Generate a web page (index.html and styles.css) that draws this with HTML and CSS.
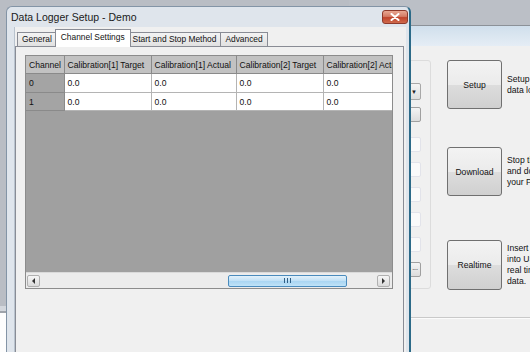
FILE: index.html
```html
<!DOCTYPE html>
<html lang="en">
<head>
  <meta charset="UTF-8" />
  <title>Data Logger Setup - Demo</title>
  <link rel="stylesheet" href="styles.css">
</head>
<body>
  <!-- main application window behind the dialog -->
  <div class="bgwin">
    <div class="bgwin-top"></div>
    <div class="bgwin-head"></div>
    <div class="bgwin-body">
      <div class="group">
        <div class="ctl combo"><span class="arrow">&#9660;</span></div>
        <div class="ctl btn-small"></div>
        <div class="ctl tb first"></div>
        <div class="ctl tb"></div>
        <div class="ctl tb"></div>
        <div class="ctl tb"></div>
        <div class="ctl tb"></div>
        <div class="ctl btn-small dots">...</div>
      </div>
      <div class="actions">
        <div class="action">
          <button class="big-btn">Setup</button>
          <p>Setup the<br>data logger</p>
        </div>
        <div class="action second">
          <button class="big-btn">Download</button>
          <p>Stop the logger<br>and download to<br>your PC.</p>
        </div>
        <div class="action third">
          <button class="big-btn">Realtime</button>
          <p>Insert logger<br>into USB for<br>real time<br>data.</p>
        </div>
      </div>
    </div>
    <div class="bgwin-foot"></div>
  </div>

  <!-- setup dialog -->
  <div class="dialog">
    <div class="titlebar">
      <span class="title">Data Logger Setup - Demo</span>
      <div class="close">
        <svg width="10" height="8" viewBox="0 0 10 8">
          <path d="M1.5 1 L8.5 7 M8.5 1 L1.5 7" stroke="#fff" stroke-width="2" stroke-linecap="round"/>
        </svg>
      </div>
    </div>
    <div class="client">
      <div class="tabs">
        <div class="tab">General</div>
        <div class="tab active">Channel Settings</div>
        <div class="tab">Start and Stop Method</div>
        <div class="tab">Advanced</div>
      </div>
      <div class="panel">
        <div class="grid">
          <table>
            <colgroup>
              <col class="c-channel">
              <col class="c-87">
              <col class="c-85">
              <col class="c-87">
              <col class="c-86">
            </colgroup>
            <tr class="head">
              <th class="rowhead">Channel</th>
              <th>Calibration[1] Target</th>
              <th>Calibration[1] Actual</th>
              <th>Calibration[2] Target</th>
              <th>Calibration[2] Actual</th>
            </tr>
            <tr class="r0">
              <td class="rowhead">0</td>
              <td>0.0</td><td>0.0</td><td>0.0</td><td>0.0</td>
            </tr>
            <tr class="r1">
              <td class="rowhead">1</td>
              <td>0.0</td><td>0.0</td><td>0.0</td><td>0.0</td>
            </tr>
          </table>
          <div class="empty"></div>
          <div class="hscroll">
            <div class="sbtn"><span class="tri left"></span></div>
            <div class="track"><div class="thumb"><span class="grip"></span></div></div>
            <div class="sbtn"><span class="tri right"></span></div>
          </div>
        </div>
      </div>
    </div>
  </div>
</body>
</html>
```

FILE: styles.css
```css
html, body {
  margin: 0;
  width: 530px;
  height: 352px;
  overflow: hidden;
}

body {
  position: relative;
  font-family: "Liberation Sans", Arial, sans-serif;
  font-size: 8.6px;
  color: #111;
  background: linear-gradient(to bottom, #b9bdc4 0, #b9bdc4 306px, #d3d7dd 306px, #d3d7dd 311px, #9ea3aa 311px, #9ea3aa 313px, #fdfdfd 313px);
}

/* ---------- background window ---------- */
.bgwin {
  position: absolute;
  left: 349px;
  top: 0;
  right: 0;
  bottom: 0;
  display: flex;
  flex-direction: column;
  background: #f0f0f0;
  overflow: hidden;
}

.bgwin-top {
  height: 25px;
  background: #bbbfc6;
  border-bottom: 1px solid #8c9198;
}

.bgwin-head {
  height: 20px;
  background: linear-gradient(to bottom, #d0dfec, #e5edf5);
}

.bgwin-body {
  height: 257px;
  padding: 14px 0 0 10px;
  display: flex;
  border-bottom: 1px solid #c9c9c9;
  background: #f0f0f0;
}

.bgwin-foot {
  flex: 1;
  border-top: 1px solid #fbfbfb;
  background: #f0f0f0;
}

.group {
  flex: none;
  width: 72px;
  height: 229px;
  border: 1px solid #dcdcdc;
  border-radius: 3px;
  display: flex;
  flex-direction: column;
  align-items: flex-end;
  padding-right: 9px;
  box-sizing: border-box;
}

.ctl {
  width: 50px;
  height: 15px;
  box-sizing: border-box;
  margin-top: 10px;
  border-radius: 2px;
}

.combo {
  height: 17px;
  margin-top: 22px;
  border: 1px solid #a8a8a8;
  background: linear-gradient(to bottom, #f4f4f4, #dedede);
  display: flex;
  justify-content: flex-end;
  align-items: center;
  padding-right: 3px;
}

.arrow {
  font-size: 6px;
  color: #222;
}

.btn-small {
  margin-top: 7px;
  border: 1px solid #a0a0a0;
  background: linear-gradient(to bottom, #f4f4f4, #dcdcdc);
}

.tb {
  border: 1px solid #e2e3ea;
  background: #fafafa;
}

.tb.first {
  margin-top: 15px;
}

.dots {
  margin-top: 10px;
  font-size: 7px;
  text-align: right;
  padding-right: 2px;
  line-height: 10px;
}

.actions {
  flex: none;
  margin-left: 16px;
  display: flex;
  flex-direction: column;
}

.action {
  display: flex;
  align-items: center;
}

.action.second { margin-top: 38px; }
.action.third { margin-top: 44px; }

.big-btn {
  flex: none;
  width: 55px;
  height: 49px;
  border: 1px solid #707070;
  border-radius: 3px;
  background: linear-gradient(to bottom, #f3f3f3 0, #ebebeb 50%, #dddddd 50%, #d0d0d0 100%);
  font-family: "Liberation Sans", Arial, sans-serif;
  font-size: 8.6px;
  color: #111;
  padding: 0;
}

.action.third .big-btn {
  height: 50px;
}

.action p {
  margin: 0 0 0 5px;
  line-height: 11px;
  white-space: nowrap;
}

/* ---------- dialog ---------- */
.dialog {
  position: absolute;
  left: 6px;
  top: 6px;
  width: 405px;
  height: 360px;
  box-sizing: border-box;
  border: 1px solid #8394a6;
  border-right: 2px solid #2c6a88;
  border-radius: 6px 6px 0 0;
  background: #dfe5ec;
  display: flex;
  flex-direction: column;
}

.titlebar {
  height: 20px;
  display: flex;
  justify-content: space-between;
  align-items: flex-start;
  padding: 0 1px 0 4px;
}

.title {
  font-size: 10.5px;
  color: #1a1a1a;
  line-height: 20px;
}

.close {
  margin-top: 3px;
  width: 26px;
  height: 14px;
  box-sizing: border-box;
  border: 1px solid #8e3a2c;
  border-radius: 3px;
  background: linear-gradient(to bottom, #e9a792 0, #d47c66 45%, #c0442c 55%, #cf6a4c 100%);
  display: flex;
  align-items: center;
  justify-content: center;
}

.client {
  flex: 1;
  margin: 0 3px 0 7px;
  background: #f0f0f0;
  border-left: 1px solid #b9c3ce;
  padding: 2px 2px 0 0;
  display: flex;
  flex-direction: column;
}

.tabs {
  height: 17px;
  display: flex;
  align-items: flex-end;
  padding-left: 2px;
}

.tab {
  height: 14px;
  line-height: 13px;
  padding: 0 4px;
  box-sizing: border-box;
  border: 1px solid #898c95;
  border-bottom: none;
  background: linear-gradient(to bottom, #f3f3f3, #e1e1e1);
  margin-left: -1px;
  white-space: nowrap;
  font-size: 8.4px;
}

.tab:first-child {
  margin-left: 0;
}

.tab.active {
  position: relative;
  z-index: 1;
  height: 18px;
  margin: 0 -2px -1px -2px;
  padding: 0 5px;
  line-height: 15px;
  background: #fff;
}

.panel {
  flex: 1;
  border: 1px solid #898c95;
  background: #f0f0f0;
  padding: 8px 10px 0 9px;
}

/* ---------- data grid ---------- */
.grid {
  height: 234px;
  display: flex;
  flex-direction: column;
  border: 1px solid #8c8c8c;
  box-sizing: border-box;
  overflow: hidden;
  background: #a0a0a0;
}

table {
  border-collapse: collapse;
  table-layout: fixed;
  width: 383px;
  flex: none;
}

.c-channel { width: 38px; }
.c-87 { width: 87px; }
.c-85 { width: 85px; }
.c-86 { width: 86px; }

th, td {
  border: 1px solid #8a8a8a;
  padding: 0 3px;
  text-align: left;
  font-weight: normal;
  white-space: nowrap;
  overflow: hidden;
}

th {
  height: 17px;
  background: #c2c2c2;
  border-top: none;
}

th.rowhead, td.rowhead {
  border-left: none;
}

td {
  background: #fff;
  border-color: #b4b4b4;
  border-left-color: #a0a0a0;
}

td.rowhead {
  background: #a4a4a4;
  border-color: #8a8a8a;
}

tr.r0 td { height: 18px; }
tr.r1 td { height: 17px; }

.empty {
  flex: 1;
}

.hscroll {
  height: 15px;
  display: flex;
  align-items: center;
  padding: 0 2px 0 1px;
  background: #ececec;
  border-top: 1px solid #dadada;
}

.sbtn {
  width: 13px;
  height: 12px;
  box-sizing: border-box;
  border: 1px solid #b0b0b0;
  border-radius: 2px;
  background: linear-gradient(to bottom, #f6f6f6, #dadada);
  display: flex;
  align-items: center;
  justify-content: center;
}

.tri {
  width: 0;
  height: 0;
  border-top: 3px solid transparent;
  border-bottom: 3px solid transparent;
}

.tri.left { border-right: 3px solid #333; }
.tri.right { border-left: 3px solid #333; }

.track {
  flex: 1;
  height: 13px;
  display: flex;
  align-items: center;
}

.thumb {
  margin-left: 188px;
  width: 119px;
  height: 12px;
  box-sizing: border-box;
  border: 1px solid #4a8bbd;
  border-radius: 2px;
  background: linear-gradient(to bottom, #e2f1fb, #bfe0f6 50%, #a9d5f2 51%, #bfe2f7);
  display: flex;
  align-items: center;
  justify-content: center;
}

.grip {
  width: 7px;
  height: 5px;
  background: repeating-linear-gradient(to right, #2f5f86 0, #2f5f86 1px, transparent 1px, transparent 3px);
}
```
